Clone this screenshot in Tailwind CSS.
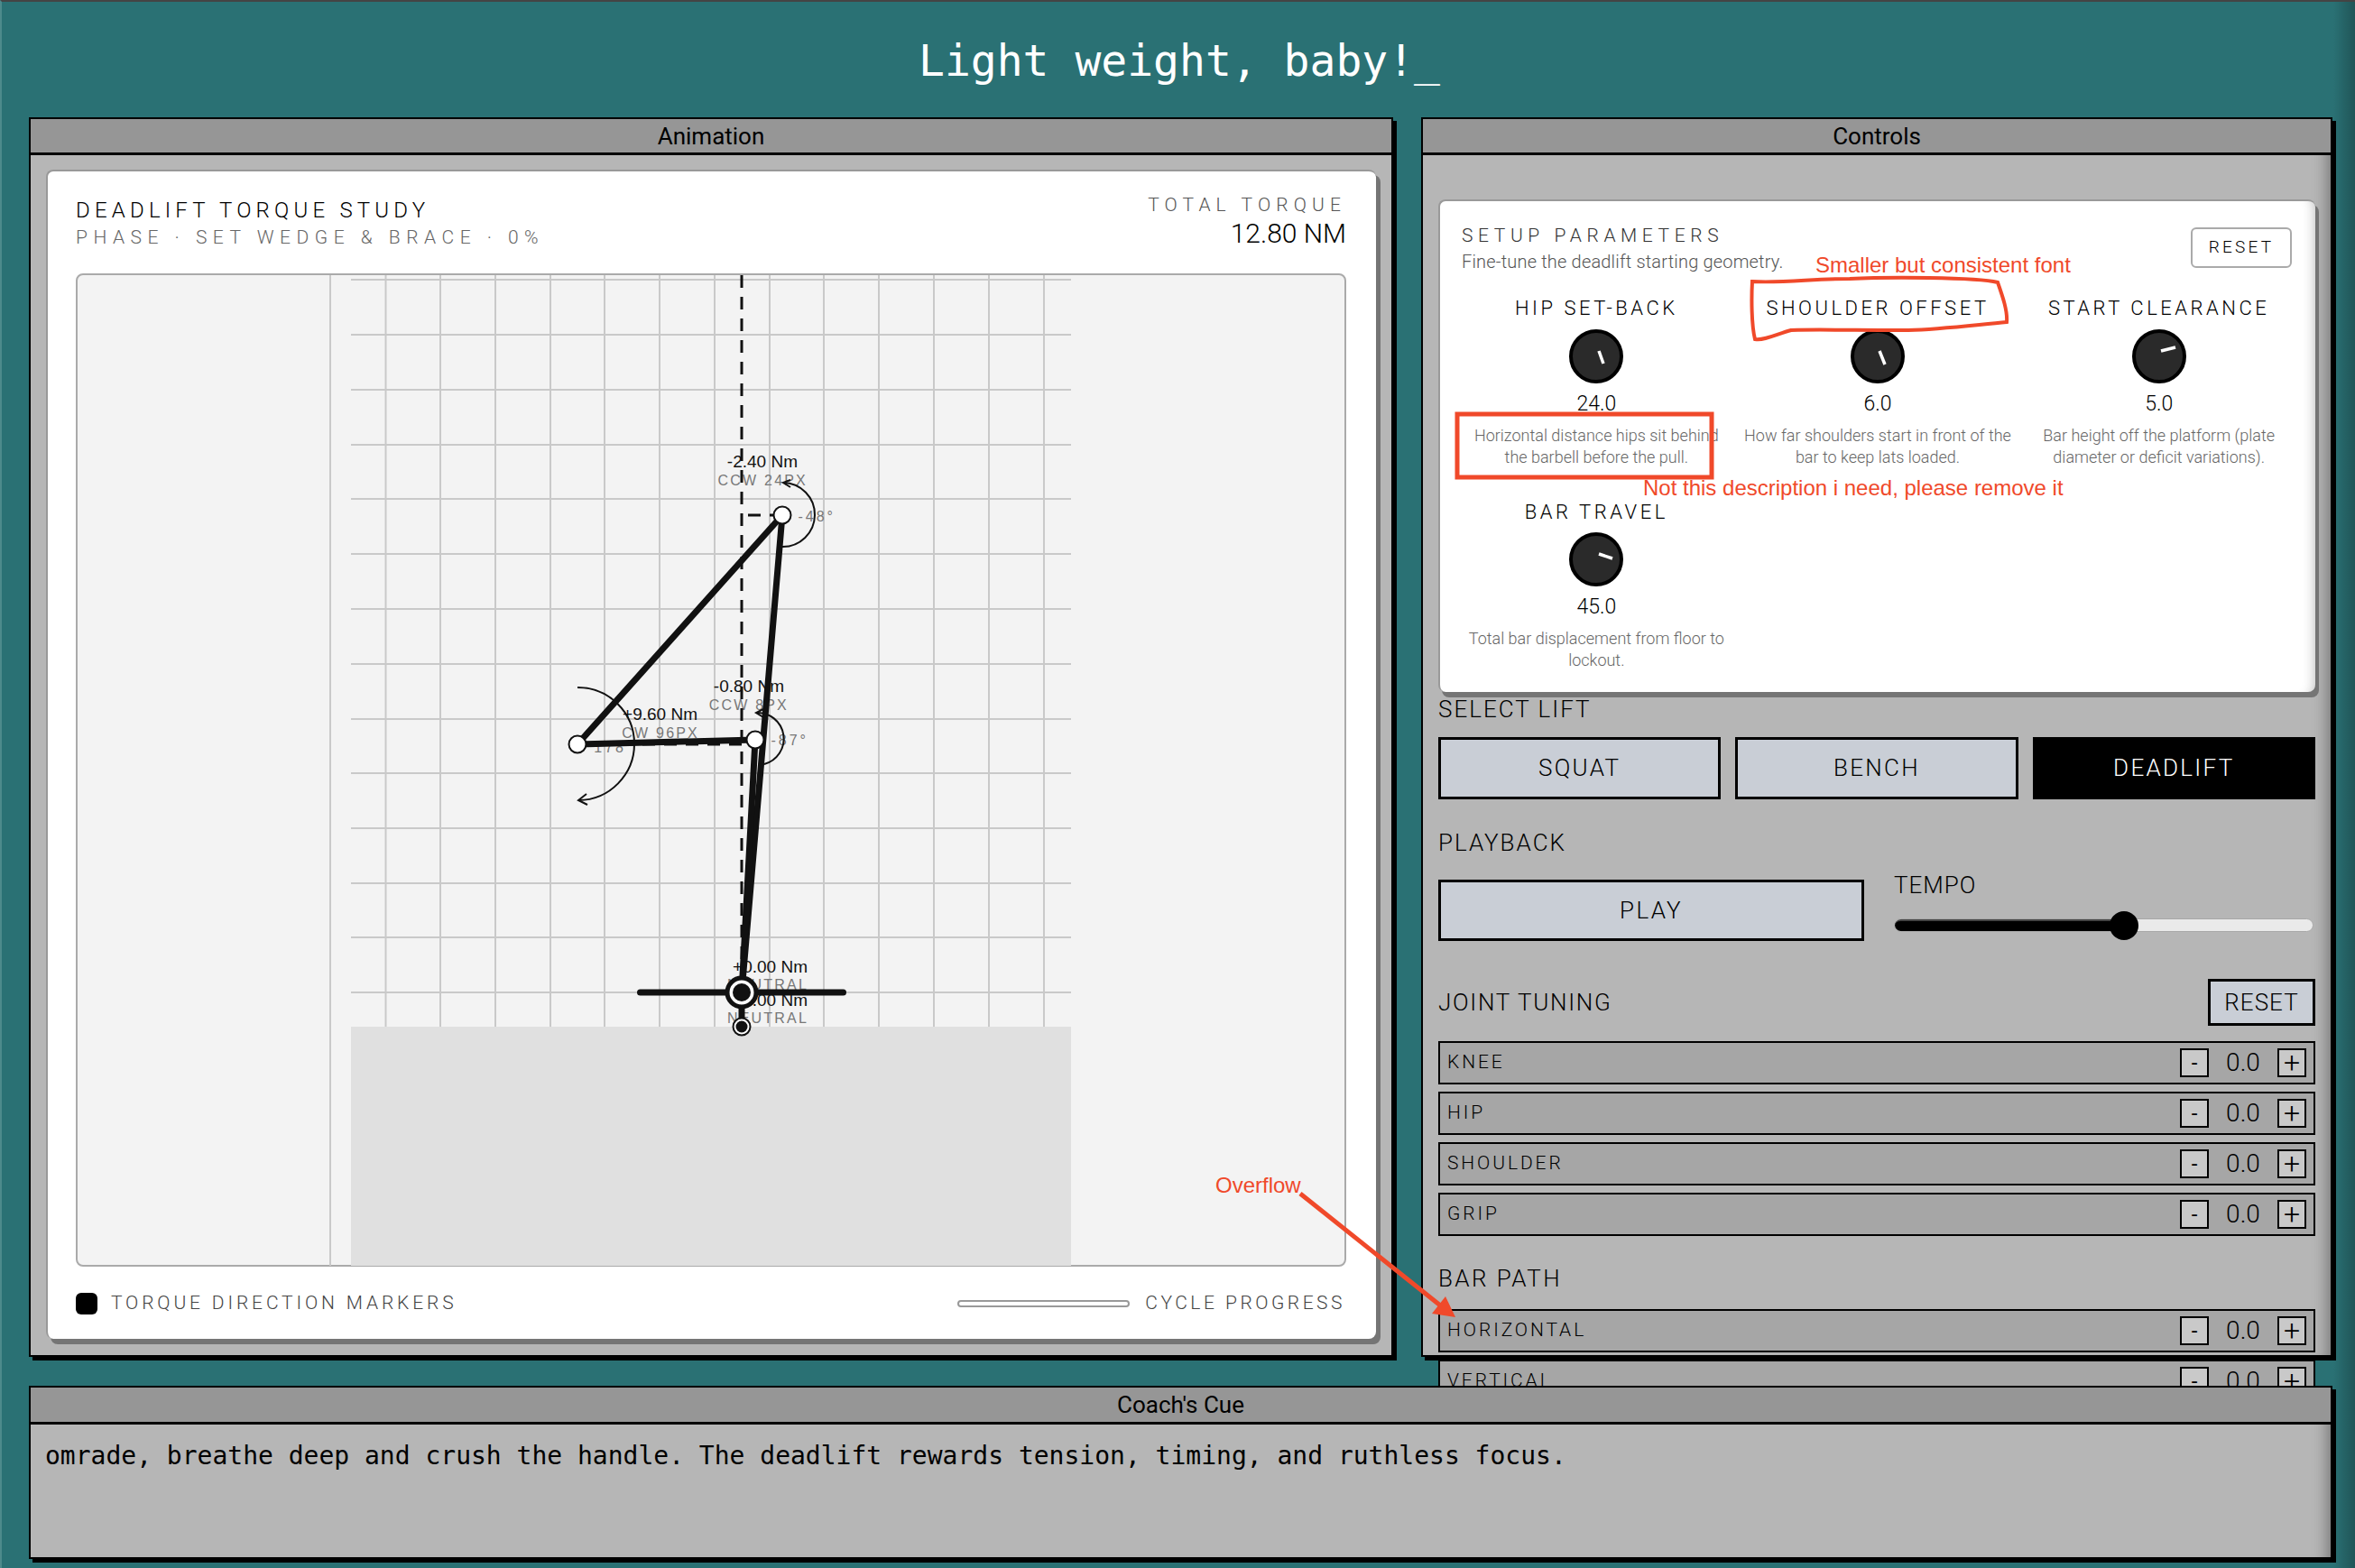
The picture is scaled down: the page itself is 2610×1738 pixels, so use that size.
<!DOCTYPE html>
<html lang="en">
<head>
    <meta charset="UTF-8" />
    <title>Light weight, baby!</title>
    <script src="https://cdn.jsdelivr.net/npm/@tailwindcss/browser@4"></script>
</head>
<body class="bg-[#2a7174] font-['Roboto',sans-serif] text-black">
<div class="relative w-[2610px] h-[1738px] overflow-hidden border-t-2 border-t-[#444] border-l-2 border-l-[#4d8a8c]">

    <!-- darker strip along the right edge of the desktop -->
    <div class="absolute right-0 top-0 bottom-0 w-[24px] -z-10 bg-gradient-to-r from-transparent to-black/25"></div>

    <!-- title -->
    <h1 class="h-[128px] flex items-center justify-center pt-[2px] pl-[2px] font-['DejaVu_Sans_Mono',monospace] text-[48px] font-normal text-white">Light weight, baby!_</h1>

    <div class="flex gap-[31px] pl-[30px] h-[1374px]">

        <!-- animation window -->
        <section class="w-[1512px] h-[1374px] flex flex-col border-2 border-black bg-[#b6b6b6] shadow-[4px_4px_0_#000]">
            <div class="h-[40px] shrink-0 border-b-[3px] border-black bg-[#969696] flex items-center justify-center text-[26px] leading-none">Animation</div>
            <div class="px-[17px] pt-[16px]">
                <div class="h-[1296px] rounded-lg bg-white border-t-2 border-l-2 border-[#999] shadow-[5px_6px_0_#757575] pl-[31px] pr-[33px] flex flex-col">
                    <div class="h-[113px] flex justify-between">
                        <div class="pt-[29px]">
                            <div class="text-[24px] leading-[28px] tracking-[5.2px] font-light">DEADLIFT TORQUE STUDY</div>
                            <div class="text-[21px] leading-[26px] mt-[3px] tracking-[6.5px] font-light text-[#666]">PHASE · SET WEDGE &amp; BRACE · 0%</div>
                        </div>
                        <div class="pt-[24px] text-right">
                            <div class="text-[21px] leading-[26px] tracking-[6.1px] font-light text-[#555]">TOTAL TORQUE</div>
                            <div class="text-[30px] leading-[36px] mt-[1px] font-light">12.80 NM</div>
                        </div>
                    </div>

                    <!-- diagram -->
                    <div class="relative h-[1101px] shrink-0 rounded-lg border-2 border-[#aaa] bg-[#f3f3f3]">
                        <svg class="absolute -left-[2px] -top-[2px]" width="1407" height="1101" viewBox="84 303 1407 1101" font-family="Liberation Sans, sans-serif">
                            <rect x="389" y="1138" width="798" height="265" fill="#e0e0e0"/>
                            <g stroke="#c9c9c9" stroke-width="2">
                                <path d="M366 305V1403"/>
                                <path d="M427.500 305V1138M488 305V1138M549 305V1138M610 305V1138M670 305V1138M731 305V1138M792 305V1138M853 305V1138M913 305V1138M974 305V1138M1035 305V1138M1096 305V1138M1157 305V1138"/>
                                <path d="M389 310H1187M389 371H1187M389 432H1187M389 493H1187M389 553H1187M389 614H1187M389 675H1187M389 736H1187M389 797H1187M389 857H1187M389 918H1187M389 979H1187M389 1039H1187M389 1100H1187"/>
                            </g>
                            <!-- labels -->
                            <g font-size="19" fill="#111" text-anchor="end">
                                <text x="884" y="518">-2.40 Nm</text>
                                <text x="869" y="767">-0.80 Nm</text>
                                <text x="773" y="798">+9.60 Nm</text>
                                <text x="895" y="1078">+0.00 Nm</text>
                                <text x="895" y="1115">+0.00 Nm</text>
                            </g>
                            <g font-size="16" fill="#777" text-anchor="end" letter-spacing="2.200">
                                <text x="895" y="538">CCW 24PX</text>
                                <text x="874" y="787">CCW 8PX</text>
                                <text x="775" y="818">CW 96PX</text>
                                <text x="896" y="1097">NEUTRAL</text>
                                <text x="896" y="1134">NEUTRAL</text>
                            </g>
                            <g font-size="16" fill="#777" text-anchor="end" letter-spacing="3">
                                <text x="926" y="578">-48°</text>
                                <text x="896" y="826">-87°</text>
                                <text x="694" y="834">178</text>
                            </g>
                            <!-- plumb lines -->
                            <g stroke="#111" stroke-width="3" fill="none" stroke-dasharray="14 10">
                                <path d="M822 305V1138"/>
                                <path d="M829 571H867"/>
                                <path d="M640 825H837"/>
                            </g>
                            <!-- torque arcs -->
                            <g stroke="#111" stroke-width="2" fill="none">
                                <path d="M867 606A35.500 35.500 0 0 0 868 535"/>
                                <path d="M876 532L868 535L876 540"/>
                                <path d="M847 847A29 29 0 0 0 838 790"/>
                                <path d="M846 786L838 790L846 795"/>
                                <path d="M640 762A62.500 62.500 0 0 1 641 887"/>
                                <path d="M650 880L641 887L651 892"/>
                            </g>
                            <!-- limbs -->
                            <g stroke="#111" stroke-width="7" fill="none" stroke-linecap="round">
                                <path d="M867 571L640 825L837 820"/>
                                <path d="M867 571L822 1100"/>
                                <path d="M837 820L822 1100V1138"/>
                                <path d="M709.500 1100H934.500"/>
                            </g>
                            <g stroke="#111" fill="#fff">
                                <circle cx="867" cy="571" r="9.500" stroke-width="2"/>
                                <circle cx="640" cy="825" r="9.500" stroke-width="2"/>
                                <circle cx="837" cy="820" r="9.500" stroke-width="2"/>
                                <circle cx="822" cy="1100" r="16" stroke-width="5"/>
                                <circle cx="822" cy="1138" r="9.500" stroke-width="2"/>
                            </g>
                            <circle cx="822" cy="1100" r="10" fill="#111"/>
                            <circle cx="822" cy="1138" r="6.500" fill="#111"/>
                        </svg>
                    </div>

                    <div class="flex-1 flex items-center justify-between pt-[2px]">
                        <div class="flex items-center gap-[15px]">
                            <span class="w-[24px] h-[24px] rounded-md bg-black"></span>
                            <span class="text-[21px] tracking-[3.85px] font-light text-[#444]">TORQUE DIRECTION MARKERS</span>
                        </div>
                        <div class="flex items-center gap-[17px] mr-[1px]">
                            <span class="w-[191px] h-[8px] rounded-full border-2 border-[#999] bg-white"></span>
                            <span class="text-[21px] tracking-[3.5px] font-light text-[#444]">CYCLE PROGRESS</span>
                        </div>
                    </div>
                </div>
            </div>
        </section>

        <!-- controls window -->
        <section class="w-[1010px] h-[1374px] flex flex-col border-2 border-black bg-[#b6b6b6] shadow-[4px_4px_0_#000,inset_-18px_0_16px_-14px_rgba(0,0,0,0.35)]">
            <div class="h-[40px] shrink-0 border-b-[3px] border-black bg-[#969696] flex items-center justify-center text-[26px] leading-none">Controls</div>
            <div class="pl-[17px] pr-[17px] pt-[49px]">

                <!-- setup parameters -->
                <div class="h-[546px] rounded-lg bg-white border-t-2 border-l-2 border-[#999] shadow-[4px_6px_0_#757575,inset_-14px_0_14px_-14px_rgba(0,0,0,0.3)] relative">
                    <div class="flex justify-between pl-[24px] pr-[26px] pt-[26px]">
                        <div>
                            <div class="text-[21px] leading-[24px] tracking-[5.6px] font-light text-[#333]">SETUP PARAMETERS</div>
                            <div class="text-[20px] leading-[24px] mt-[5px] tracking-[0.18px] font-light text-[#555]">Fine-tune the deadlift starting geometry.</div>
                        </div>
                        <button class="w-[112px] h-[45px] mt-[3px] rounded-md border-2 border-[#aaa] text-[19px] tracking-[0.17em] font-light">RESET</button>
                    </div>
                    <div class="grid grid-cols-3 gap-x-[13px] pl-[24px] pr-[24px] mt-[28px]">
                        <div class="h-[226px] flex flex-col items-center text-center">
                            <div class="text-[22px] leading-[24px] tracking-[0.16em] font-light whitespace-nowrap">HIP SET-BACK</div>
                            <svg class="mt-[11px]" width="60" height="60" viewBox="0 0 60 60"><circle cx="30" cy="30" r="28" fill="#2a2a2a" stroke="#000" stroke-width="4"/><path d="M33 24L38 38" stroke="#fff" stroke-width="3.500"/></svg>
                            <div class="text-[23px] leading-[28px] mt-[9px] font-light">24.0</div>
                            <div class="text-[18px] leading-[24px] mt-[9px] font-light text-[#666] whitespace-nowrap">Horizontal distance hips sit behind<br>the barbell before the pull.</div>
                        </div>
                        <div class="h-[226px] flex flex-col items-center text-center">
                            <div class="text-[22px] leading-[24px] tracking-[0.16em] font-light whitespace-nowrap">SHOULDER OFFSET</div>
                            <svg class="mt-[11px]" width="60" height="60" viewBox="0 0 60 60"><circle cx="30" cy="30" r="28" fill="#2a2a2a" stroke="#000" stroke-width="4"/><path d="M32 24L38 39" stroke="#fff" stroke-width="3.500"/></svg>
                            <div class="text-[23px] leading-[28px] mt-[9px] font-light">6.0</div>
                            <div class="text-[18px] leading-[24px] mt-[9px] font-light text-[#666] whitespace-nowrap">How far shoulders start in front of the<br>bar to keep lats loaded.</div>
                        </div>
                        <div class="h-[226px] flex flex-col items-center text-center">
                            <div class="text-[22px] leading-[24px] tracking-[0.16em] font-light whitespace-nowrap">START CLEARANCE</div>
                            <svg class="mt-[11px]" width="60" height="60" viewBox="0 0 60 60"><circle cx="30" cy="30" r="28" fill="#2a2a2a" stroke="#000" stroke-width="4"/><path d="M32 24L48 20" stroke="#fff" stroke-width="3.500"/></svg>
                            <div class="text-[23px] leading-[28px] mt-[9px] font-light">5.0</div>
                            <div class="text-[18px] leading-[24px] mt-[9px] font-light text-[#666] whitespace-nowrap">Bar height off the platform (plate<br>diameter or deficit variations).</div>
                        </div>
                        <div class="h-[226px] flex flex-col items-center text-center">
                            <div class="text-[22px] leading-[24px] tracking-[0.16em] font-light whitespace-nowrap">BAR TRAVEL</div>
                            <svg class="mt-[10px]" width="60" height="60" viewBox="0 0 60 60"><circle cx="30" cy="30" r="28" fill="#2a2a2a" stroke="#000" stroke-width="4"/><path d="M33 24L48 29" stroke="#fff" stroke-width="3.500"/></svg>
                            <div class="text-[23px] leading-[28px] mt-[9px] font-light">45.0</div>
                            <div class="text-[18px] leading-[24px] mt-[9px] font-light text-[#666] whitespace-nowrap">Total bar displacement from floor to<br>lockout.</div>
                        </div>
                    </div>
                </div>

                <!-- select lift -->
                <div class="text-[26px] leading-[26px] mt-[6px] tracking-[2px] font-light">SELECT LIFT</div>
                <div class="grid grid-cols-3 gap-[16px] mt-[18px]">
                    <button class="h-[69px] border-[3px] border-black bg-[#c9ced6] text-[26px] tracking-[2.3px] font-light">SQUAT</button>
                    <button class="h-[69px] border-[3px] border-black bg-[#c9ced6] text-[26px] tracking-[2.3px] font-light">BENCH</button>
                    <button class="h-[69px] border-[3px] border-black bg-black text-white text-[26px] tracking-[2.3px] font-light">DEADLIFT</button>
                </div>

                <!-- playback -->
                <div class="text-[26px] leading-[26px] mt-[35px] tracking-[2px] font-light">PLAYBACK</div>
                <div class="flex gap-[33px] mt-[28px]">
                    <button class="w-[472px] h-[68px] border-[3px] border-black bg-[#c9ced6] text-[26px] tracking-[2.3px] font-light">PLAY</button>
                    <div class="flex-1 pr-[2px]">
                        <div class="text-[26px] leading-[26px] -mt-[7px] tracking-[1px] font-light">TEMPO</div>
                        <div class="relative h-[15px] mt-[24px] rounded-full bg-[#eaeaea] border border-[#a8a8a8]">
                            <div class="w-[256px] h-full rounded-full bg-black border-t-2 border-[#444]"></div>
                            <div class="absolute left-[238px] -top-[9px] w-[32px] h-[32px] rounded-full bg-black"></div>
                        </div>
                    </div>
                </div>

                <!-- joint tuning -->
                <div class="flex items-center justify-between mt-[42px]">
                    <div class="text-[26px] tracking-[1.7px] font-light">JOINT TUNING</div>
                    <button class="w-[119px] h-[52px] border-[3px] border-black bg-[#c9ced6] text-[26px] tracking-[0.04em] font-light">RESET</button>
                </div>
                <div class="mt-[17px] flex flex-col gap-[8px]">
                    <div class="h-[48px] flex items-center border-2 border-black bg-[#a6a6a6] pl-[8px] pr-[8px]">
                        <span class="flex-1 text-[21px] tracking-[2.9px] font-light">KNEE</span>
                        <span class="w-[32px] h-[32px] flex items-center justify-center border-2 border-black bg-[#c9c9c9] text-[24px] leading-none">-</span>
                        <span class="w-[76px] text-center text-[28px] font-light">0.0</span>
                        <span class="w-[32px] h-[32px] flex items-center justify-center border-2 border-black bg-[#c9c9c9] text-[32px] font-light leading-none">+</span>
                    </div>
                    <div class="h-[48px] flex items-center border-2 border-black bg-[#a6a6a6] pl-[8px] pr-[8px]">
                        <span class="flex-1 text-[21px] tracking-[2.9px] font-light">HIP</span>
                        <span class="w-[32px] h-[32px] flex items-center justify-center border-2 border-black bg-[#c9c9c9] text-[24px] leading-none">-</span>
                        <span class="w-[76px] text-center text-[28px] font-light">0.0</span>
                        <span class="w-[32px] h-[32px] flex items-center justify-center border-2 border-black bg-[#c9c9c9] text-[32px] font-light leading-none">+</span>
                    </div>
                    <div class="h-[48px] flex items-center border-2 border-black bg-[#a6a6a6] pl-[8px] pr-[8px]">
                        <span class="flex-1 text-[21px] tracking-[2.9px] font-light">SHOULDER</span>
                        <span class="w-[32px] h-[32px] flex items-center justify-center border-2 border-black bg-[#c9c9c9] text-[24px] leading-none">-</span>
                        <span class="w-[76px] text-center text-[28px] font-light">0.0</span>
                        <span class="w-[32px] h-[32px] flex items-center justify-center border-2 border-black bg-[#c9c9c9] text-[32px] font-light leading-none">+</span>
                    </div>
                    <div class="h-[48px] flex items-center border-2 border-black bg-[#a6a6a6] pl-[8px] pr-[8px]">
                        <span class="flex-1 text-[21px] tracking-[2.9px] font-light">GRIP</span>
                        <span class="w-[32px] h-[32px] flex items-center justify-center border-2 border-black bg-[#c9c9c9] text-[24px] leading-none">-</span>
                        <span class="w-[76px] text-center text-[28px] font-light">0.0</span>
                        <span class="w-[32px] h-[32px] flex items-center justify-center border-2 border-black bg-[#c9c9c9] text-[32px] font-light leading-none">+</span>
                    </div>
                </div>

                <!-- bar path -->
                <div class="text-[26px] leading-[26px] mt-[34px] tracking-[2.4px] font-light">BAR PATH</div>
                <div class="mt-[21px] flex flex-col gap-[8px]">
                    <div class="h-[48px] flex items-center border-2 border-black bg-[#a6a6a6] pl-[8px] pr-[8px]">
                        <span class="flex-1 text-[21px] tracking-[2.9px] font-light">HORIZONTAL</span>
                        <span class="w-[32px] h-[32px] flex items-center justify-center border-2 border-black bg-[#c9c9c9] text-[24px] leading-none">-</span>
                        <span class="w-[76px] text-center text-[28px] font-light">0.0</span>
                        <span class="w-[32px] h-[32px] flex items-center justify-center border-2 border-black bg-[#c9c9c9] text-[32px] font-light leading-none">+</span>
                    </div>
                    <div class="h-[48px] flex items-center border-2 border-black bg-[#a6a6a6] pl-[8px] pr-[8px]">
                        <span class="flex-1 text-[21px] tracking-[2.9px] font-light">VERTICAL</span>
                        <span class="w-[32px] h-[32px] flex items-center justify-center border-2 border-black bg-[#c9c9c9] text-[24px] leading-none">-</span>
                        <span class="w-[76px] text-center text-[28px] font-light">0.0</span>
                        <span class="w-[32px] h-[32px] flex items-center justify-center border-2 border-black bg-[#c9c9c9] text-[32px] font-light leading-none">+</span>
                    </div>
                </div>
            </div>
        </section>
    </div>

    <!-- coach's cue -->
    <section class="relative z-10 ml-[30px] mt-[32px] w-[2553px] h-[192px] border-2 border-black bg-[#b6b6b6] shadow-[4px_4px_0_#000,inset_-18px_0_16px_-14px_rgba(0,0,0,0.35)]">
        <div class="h-[41px] border-b-[3px] border-black bg-[#969696] flex items-center justify-center text-[26px] leading-none">Coach's Cue</div>
        <p class="px-[16px] pt-[18px] font-['DejaVu_Sans_Mono',monospace] text-[28px] leading-[34px] whitespace-nowrap">omrade, breathe deep and crush the handle. The deadlift rewards tension, timing, and ruthless focus.</p>
    </section>

    <!-- review markup drawn over the screenshot -->
    <svg class="absolute -left-[2px] -top-[2px] z-20 pointer-events-none" width="2610" height="1738" viewBox="0 0 2610 1738" font-family="Liberation Sans, sans-serif">
        <g fill="#f0492a" font-size="24">
            <text x="2012" y="302">Smaller but consistent font</text>
            <text x="1821" y="549">Not this description i need, please remove it</text>
            <text x="1347" y="1322">Overflow</text>
        </g>
        <path d="M1942 312C1975 314 2010 309 2050 309C2090 307 2190 307 2214 313C2220 330 2225 345 2224 357C2190 360 2150 365 2115 366C2060 366 2000 365 1985 366C1970 370 1955 378 1945 376C1941 360 1941 330 1942 312Z" fill="none" stroke="#f0492a" stroke-width="4"/>
        <rect x="1615" y="459" width="282" height="70" fill="none" stroke="#f0492a" stroke-width="5"/>
        <path d="M1441 1323L1600 1450" stroke="#f0492a" stroke-width="5"/>
        <path d="M1613 1460L1602 1437L1587 1456Z" fill="#f0492a"/>
    </svg>
</div>
</body>
</html>
